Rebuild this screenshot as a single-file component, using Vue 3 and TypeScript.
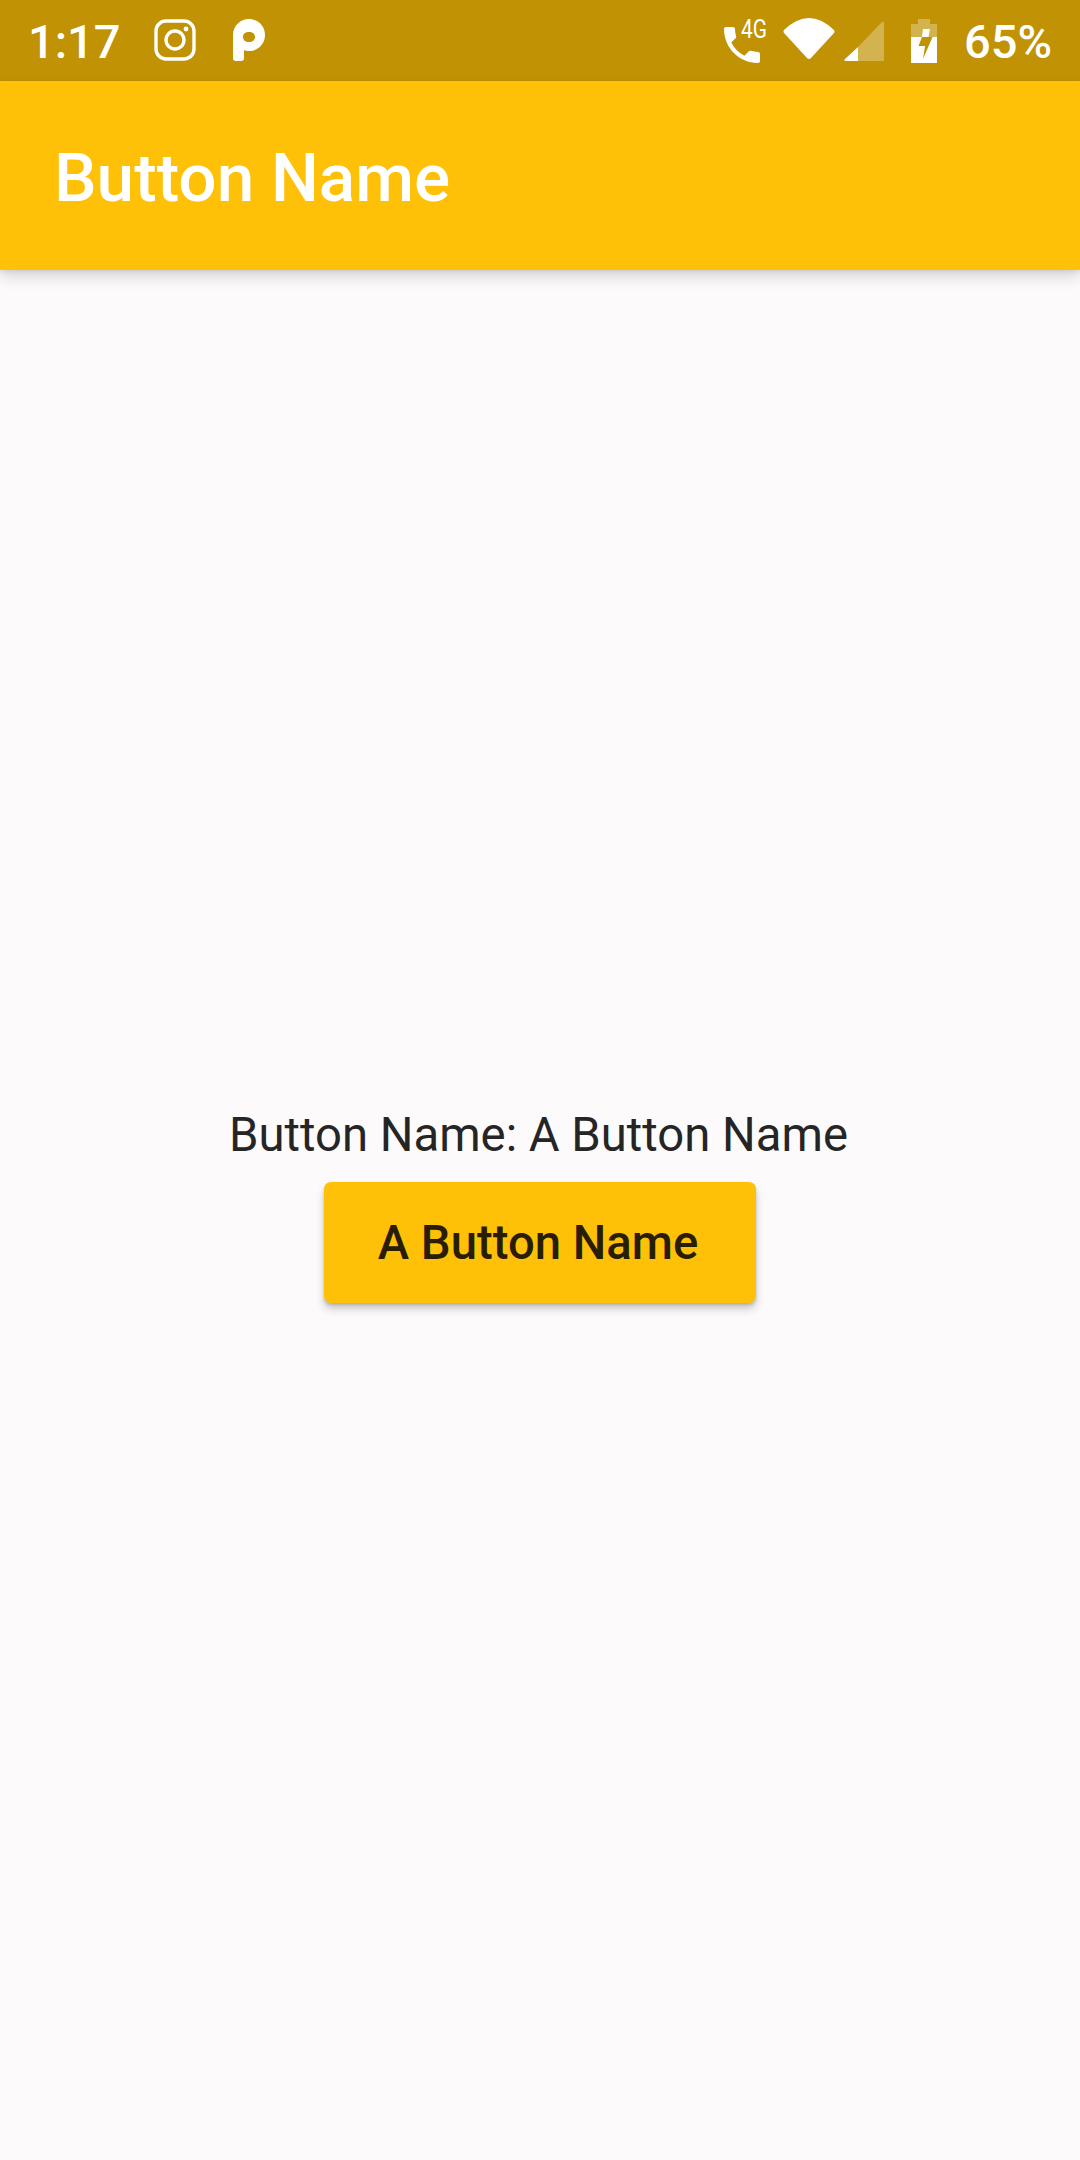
<template>
  <div class="screen">
    <div class="status-bar">
      <div class="status-left">
        <span class="clock">1:17</span>
        <svg class="ig" width="42" height="42" viewBox="0 0 42 42">
          <rect x="2" y="2" width="38" height="38" rx="10" fill="none" stroke="#fff" stroke-width="3.4" />
          <circle cx="21" cy="21" r="9" fill="none" stroke="#fff" stroke-width="3.4" />
          <circle cx="32" cy="10" r="2.4" fill="#fff" />
        </svg>
        <svg class="parking" width="32" height="42" viewBox="0 0 32 42">
          <path
            fill="#fff"
            fill-rule="evenodd"
            d="M0 16C0 7 7 0 16 0s16 7 16 16-7 16-16 16c-2 0-3.500-.3-5-.8V39q0 3-3 3H3q-3 0-3-3ZM16 13c-3.500 0-6 1.500-6 5 0 3 2.500 5 6 5s6-2 6-5c0-3.500-2.500-5-6-5Z"
          />
        </svg>
      </div>
      <div class="status-right">
        <svg class="call" width="50" height="52" viewBox="0 -4 50 52">
          <path
            fill="#fff"
            transform="translate(-6 2) scale(2)"
            d="M20 15.500c-1.250 0-2.450-.2-3.570-.57-.35-.11-.74-.03-1.020.24l-2.200 2.200c-2.830-1.440-5.150-3.750-6.590-6.590l2.200-2.210c.28-.26.36-.65.25-1C8.700 6.450 8.500 5.250 8.500 4c0-.55-.45-1-1-1H4c-.55 0-1 .45-1 1 0 9.390 7.610 17 17 17 .55 0 1-.45 1-1v-3.500c0-.55-.45-1-1-1z"
          />
          <text x="17" y="19" class="net" textLength="26" lengthAdjust="spacingAndGlyphs">4G</text>
        </svg>
        <svg class="wifi" width="52" height="42" viewBox="0 0 52 42">
          <path fill="#fff" d="M1 12Q26-12 51 12 52 13.500 51 15L28 40Q26 42 24 40L1 15Q0 13.500 1 12Z" />
        </svg>
        <svg class="signal" width="40" height="40" viewBox="0 0 40 40">
          <path fill="#fff" fill-opacity="0.3" d="M14 26 38 1Q40 0 40 2V40H14Z" />
          <path fill="#fff" d="M14 26V40H2Q-1 40 1 38Z" />
        </svg>
        <svg class="battery" width="26" height="44" viewBox="0 0 26 44">
          <path fill="#fff" fill-opacity="0.3" d="M7 0H19V5H26V18H0V5H7Z" />
          <path fill="#fff" d="M0 18H26V44H0Z" />
          <path fill="#fff" d="M12 10H19L17.500 18H11Z" />
          <path fill="#c09204" d="M11 18H21.500L12 40 14 27H7.500Z" />
        </svg>
        <span class="percent">65%</span>
      </div>
    </div>

    <header class="app-bar">
      <h1 class="title">Button Name</h1>
    </header>

    <main class="body">
      <p class="label">Button Name: {{ buttonName }}</p>
      <div class="tap-target">
        <button class="raised" type="button">{{ buttonName }}</button>
      </div>
    </main>
  </div>
</template>

<script setup lang="ts">
const buttonName = 'A Button Name';
</script>

<style>
html,
body {
  margin: 0;
  background: #fcfafb;
}
</style>

<style scoped>
.screen {
  display: flex;
  flex-direction: column;
  width: 1080px;
  height: 2160px;
  overflow: hidden;
  background: #fcfafb;
  font-family: Roboto, "Liberation Sans", sans-serif;
}

.status-bar {
  display: flex;
  flex: none;
  align-items: center;
  justify-content: space-between;
  height: 81px;
  padding: 0 28px;
  box-sizing: border-box;
  background: #c09204;
  color: #fff;
}

.status-left,
.status-right {
  display: flex;
  align-items: center;
}

.clock {
  padding-top: 3px;
  font-size: 47px;
  font-weight: 500;
  line-height: 78px;
}

.ig {
  margin-left: 33px;
  margin-top: -1px;
}

.parking {
  margin-left: 37px;
  margin-top: -1px;
}

.net {
  font-size: 25px;
  fill: #fff;
  font-family: Roboto, sans-serif;
}

.wifi {
  margin-left: 9px;
  margin-top: -3px;
}

.signal {
  margin-left: 9px;
}

.battery {
  margin-left: 27px;
}

.percent {
  margin-left: 27px;
  padding-top: 3px;
  font-size: 47px;
  font-weight: 500;
  line-height: 78px;
}

.app-bar {
  position: relative;
  z-index: 1;
  display: flex;
  flex: none;
  align-items: center;
  height: 189px;
  padding: 3px 0 0 54px;
  box-sizing: border-box;
  background: #ffc107;
  box-shadow: 0 7px 14px rgba(0, 0, 0, 0.14), 0 2px 4px rgba(0, 0, 0, 0.08);
}

.title {
  margin: 0;
  color: #fff;
  font-size: 67.500px;
  font-weight: 500;
}

.body {
  display: flex;
  flex: 1;
  flex-direction: column;
  align-items: center;
  justify-content: center;
}

.label {
  margin: 0 3px 0 0;
  padding-top: 2px;
  color: #252525;
  font-size: 47.250px;
  line-height: 53px;
}

.tap-target {
  display: flex;
  align-items: center;
  height: 162px;
}

.raised {
  height: 121.500px;
  padding: 0 58px 0 54px;
  border: 0;
  border-radius: 7px;
  background: #ffc107;
  box-shadow: 0 6px 8px rgba(0, 0, 0, 0.2), 0 2px 3px rgba(0, 0, 0, 0.14);
  color: #2a1d05;
  font-family: inherit;
  font-size: 47.250px;
  font-weight: 500;
}
</style>
